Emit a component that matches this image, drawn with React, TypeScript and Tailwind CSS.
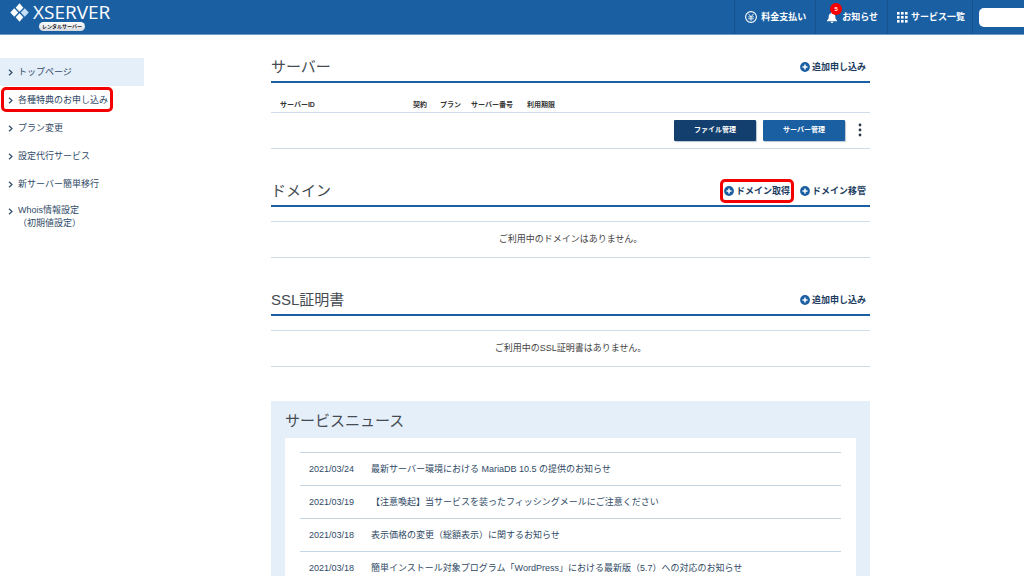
import type { ReactNode } from "react";

const menu = [
  { label: "トップページ", active: true },
  { label: "各種特典のお申し込み", marked: true },
  { label: "プラン変更" },
  { label: "設定代行サービス" },
  { label: "新サーバー簡単移行" },
];

const news = [
  { date: "2021/03/24", title: "最新サーバー環境における MariaDB 10.5 の提供のお知らせ" },
  { date: "2021/03/19", title: "【注意喚起】当サービスを装ったフィッシングメールにご注意ください" },
  { date: "2021/03/18", title: "表示価格の変更（総額表示）に関するお知らせ" },
  { date: "2021/03/18", title: "簡単インストール対象プログラム「WordPress」における最新版（5.7）への対応のお知らせ" },
];

function Chevron() {
  return (
    <svg viewBox="0 0 5 7" className="mt-1 h-[7px] w-[5px] shrink-0" fill="none" stroke="#2f4a66" strokeWidth="1.2">
      <path d="M1 0.7 4 3.5 1 6.3" />
    </svg>
  );
}

function PlusIcon() {
  return (
    <svg viewBox="0 0 10 10" className="size-[10px] shrink-0">
      <circle cx="5" cy="5" r="4.9" fill="#1b5fa3" />
      <path d="M5 2.5v5M2.5 5h5" stroke="#fff" strokeWidth="1.5" />
    </svg>
  );
}

function YenIcon() {
  return (
    <svg viewBox="0 0 12 12" className="size-3 shrink-0" fill="none" stroke="#fff">
      <circle cx="6" cy="6" r="5.4" strokeWidth="1.1" />
      <path d="M3.3 2.700 6 5.700l2.700-3M6 5.700v4M3.300 5.900h5.400M3.300 7.800h5.400" strokeWidth="0.9" />
    </svg>
  );
}

function BellIcon() {
  return (
    <svg viewBox="0 0 10 11" className="h-[11px] w-[10px]" fill="#fff">
      <path d="M5 0c.6 0 1 .4 1 1v.3C7.500 1.700 8.300 3 8.300 4.500c0 2.200.6 3.200 1.700 4v.8H0v-.8c1.100-.8 1.700-1.800 1.700-4C1.700 3 2.500 1.700 4 1.300V1c0-.6.4-1 1-1z" />
      <path d="M3.700 9.800h2.600a1.300 1.200 0 0 1-2.600 0z" />
    </svg>
  );
}

function GridIcon() {
  const steps = [0, 4, 8];
  return (
    <svg viewBox="0 0 11 11" className="size-[11px] shrink-0" fill="#fff">
      {steps.map((y) => steps.map((x) => <rect key={`${x}-${y}`} x={x} y={y} width="2.6" height="2.6" />))}
    </svg>
  );
}

function Logo() {
  return (
    <a href="#" className="flex gap-1 pl-[10px] text-white">
      <svg viewBox="0 0 20 20" className="mt-[3px] size-[19px]" fill="#fff">
        <path d="M10 0.300 14 4.900 10 9.300 6 4.900z" />
        <path d="M4.500 5.600 8.700 10 4.500 14.400 0.300 10z" />
        <path d="M15.500 5.600 19.700 10 15.500 14.400 11.300 10z" fill="#c3def5" />
        <path d="M10 10.700 14 15.100 10 19.700 6 15.100z" />
      </svg>
      <span className="flex flex-col items-start">
        <span className="mt-[2px] font-['Open_Sans','Noto_Sans',sans-serif] text-[19px] leading-5 font-medium">XSERVER</span>
        <span className="ml-[6px] flex h-[9px] items-center rounded-full bg-gradient-to-b from-white to-[#d5d9de] px-[3px] text-[5px] leading-none font-bold text-[#222]">
          レンタルサーバー
        </span>
      </span>
    </a>
  );
}

function AddLink({ children, marked }: { children: ReactNode; marked?: boolean }) {
  return (
    <a href="#" className="relative flex items-center gap-[2px] text-[9px] leading-3 font-bold text-[#1d3d5f]">
      <PlusIcon />
      {children}
      {marked && <span className="pointer-events-none absolute -inset-x-1 -inset-y-[6px] rounded-[5px] border-[3px] border-[#f40000]" />}
    </a>
  );
}

function SectionHead({ title, children }: { title: string; children: ReactNode }) {
  return (
    <div className="flex h-8 items-center justify-between border-b-2 border-[#1b5fa3] pt-[2px] pr-1">
      <h2 className="text-[15px] leading-5 text-[#444b52]">{title}</h2>
      <div className="flex gap-[10px]">{children}</div>
    </div>
  );
}

function EmptyNote({ children }: { children: ReactNode }) {
  return (
    <p className="mt-[14px] flex h-[37px] items-center justify-center border-y border-[#cfdce9] pt-[2px] text-[9px] text-[#444]">
      {children}
    </p>
  );
}

export default function App() {
  return (
    <div className="h-screen overflow-hidden bg-white font-['Liberation_Sans','Noto_Sans_CJK_JP',sans-serif]">
      <header className="flex h-[35px] justify-between border-b border-[#6c9bc9] bg-[#1b5fa3] text-[9px] font-bold text-white">
        <Logo />
        <nav className="flex">
          <a href="#" className="flex items-center gap-1 border-l border-[#17528e] pr-[9px] pl-[10px]">
            <YenIcon />
            <span className="pt-[2px]">料金支払い</span>
          </a>
          <a href="#" className="flex items-center gap-[5px] border-l border-[#17528e] pr-[9px] pl-[11px]">
            <span className="relative">
              <BellIcon />
              <span className="absolute -top-[9px] left-[3px] flex size-3 items-center justify-center rounded-full bg-[#f80000] text-[6px] leading-none">
                5
              </span>
            </span>
            <span className="pt-[2px]">お知らせ</span>
          </a>
          <a href="#" className="flex items-center gap-[3px] border-x border-[#17528e] pr-[7px] pl-[9px]">
            <GridIcon />
            <span className="pt-[2px]">サービス一覧</span>
          </a>
          <div className="flex items-center pl-[6px]">
            <input type="text" aria-label="アカウント" className="h-[19px] w-[45px] rounded-l-[5px] bg-white px-1 text-[9px] text-[#333]" />
          </div>
        </nav>
      </header>

      <div className="flex">
        <aside className="w-36 shrink-0 pt-[23px]">
          <ul className="text-[9px] leading-[14px] text-[#2f4a66]">
            {menu.map((item) => (
              <li key={item.label} className={item.active ? "bg-[#e5effa]" : ""}>
                <a href="#" className="relative flex gap-[5px] py-[7px] pl-2">
                  <Chevron />
                  {item.label}
                  {item.marked && (
                    <span className="pointer-events-none absolute top-[1px] bottom-[2px] left-[1px] w-28 rounded-[5px] border-[3px] border-[#f40000]" />
                  )}
                </a>
              </li>
            ))}
            <li>
              <a href="#" className="flex gap-[5px] py-[6px] pl-2 leading-[13px]">
                <Chevron />
                <span>
                  Whois情報設定
                  <br />
                  （初期値設定）
                </span>
              </a>
            </li>
          </ul>
        </aside>

        <main className="mr-[154px] ml-[127px] min-w-0 flex-1 pt-4">
          <section>
            <SectionHead title="サーバー">
              <AddLink>追加申し込み</AddLink>
            </SectionHead>
            <table className="mt-3 w-full table-fixed border-collapse text-[7px]">
              <thead>
                <tr className="h-[17px] border-b border-[#cfdce9] text-left text-[#333]">
                  <th className="w-[142px] pt-1 pl-[9px]">サーバーID</th>
                  <th className="w-[27px] pt-1">契約</th>
                  <th className="w-[31px] pt-1">プラン</th>
                  <th className="w-[56px] pt-1">サーバー番号</th>
                  <th className="pt-1">利用期限</th>
                </tr>
              </thead>
              <tbody>
                <tr className="h-9 border-b border-[#cfdce9]">
                  <td colSpan={5}>
                    <div className="flex items-center justify-end gap-[7px] pr-2 font-bold text-white">
                      <button type="button" className="h-[21px] w-[82px] rounded-[1px] bg-[#123f6d] shadow-[1px_1px_1px_#b8c4d0]">
                        ファイル管理
                      </button>
                      <button type="button" className="h-[21px] w-[82px] rounded-[1px] bg-[#1b5fa3] shadow-[1px_1px_1px_#b8c4d0]">
                        サーバー管理
                      </button>
                      <button type="button" aria-label="メニュー" className="ml-[6px]">
                        <svg viewBox="0 0 4 14" className="h-[14px] w-1" fill="#2b3a4a">
                          <circle cx="2" cy="2" r="1.4" />
                          <circle cx="2" cy="7" r="1.4" />
                          <circle cx="2" cy="12" r="1.4" />
                        </svg>
                      </button>
                    </div>
                  </td>
                </tr>
              </tbody>
            </table>
          </section>

          <section className="mt-[26px]">
            <SectionHead title="ドメイン">
              <AddLink marked>ドメイン取得</AddLink>
              <AddLink>ドメイン移管</AddLink>
            </SectionHead>
            <EmptyNote>ご利用中のドメインはありません。</EmptyNote>
          </section>

          <section className="mt-[26px]">
            <SectionHead title="SSL証明書">
              <AddLink>追加申し込み</AddLink>
            </SectionHead>
            <EmptyNote>ご利用中のSSL証明書はありません。</EmptyNote>
          </section>

          <section className="mt-[34px] bg-[#e5effa] px-[14px] pb-[14px]">
            <h2 className="flex h-[37px] items-center pt-1 text-[15px] text-[#444b52]">サービスニュース</h2>
            <div className="bg-white px-[15px] py-[14px]">
              <ul className="border-t border-[#c6d5e4] text-[9px] text-[#2f4a66]">
                {news.map((item) => (
                  <li key={item.title} className="flex h-[33px] items-center border-b border-[#c6d5e4] pt-[2px] pl-[9px]">
                    <time className="w-[62px] shrink-0">{item.date}</time>
                    <a href="#" className="whitespace-nowrap">
                      {item.title}
                    </a>
                  </li>
                ))}
              </ul>
            </div>
          </section>
        </main>
      </div>
    </div>
  );
}
